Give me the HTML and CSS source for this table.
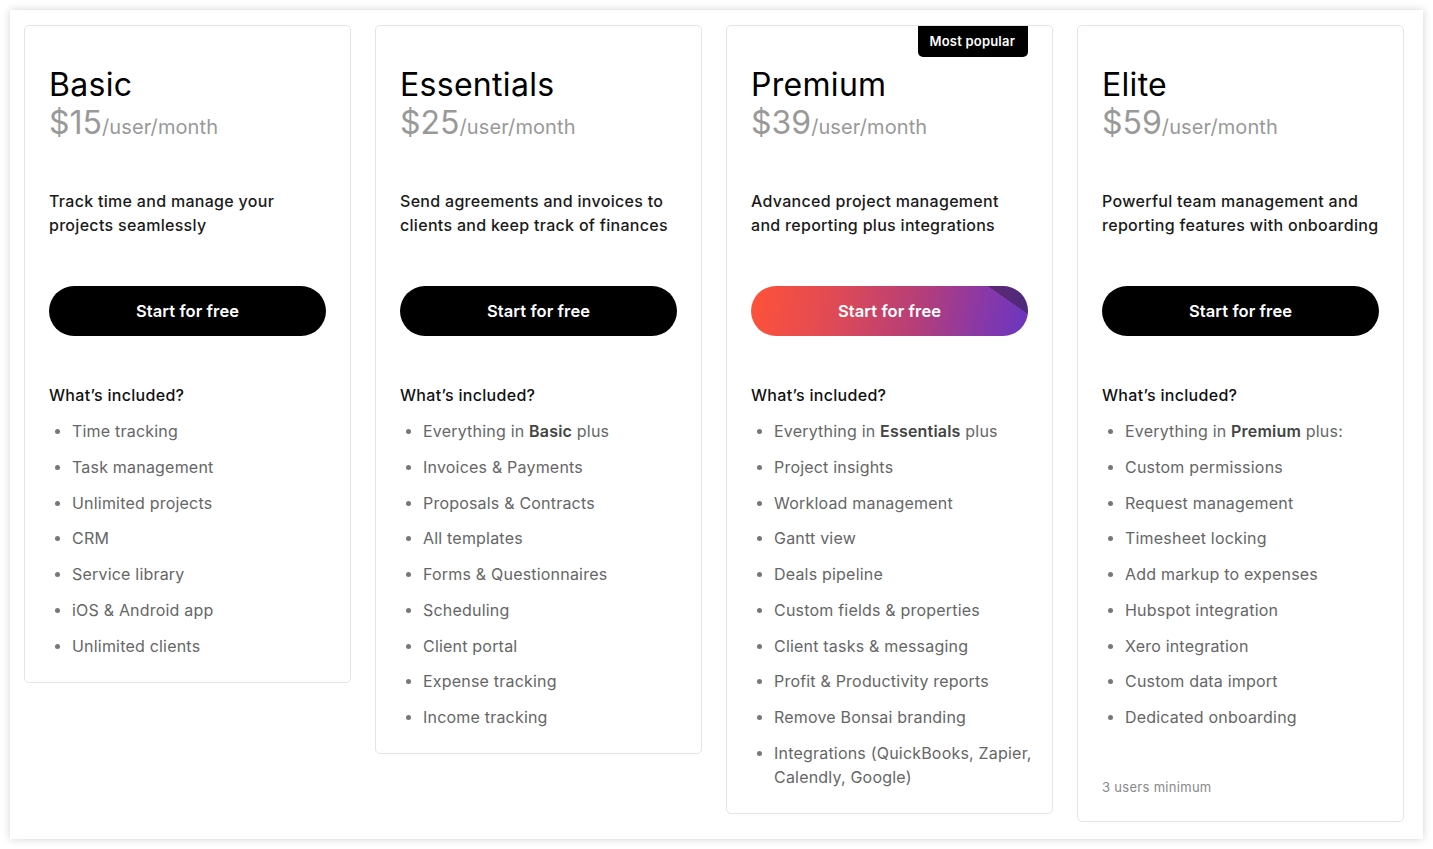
FILE: index.html
```html
<!DOCTYPE html>
<html lang="en">
<head>
<meta charset="utf-8">
<title>Pricing</title>
<link rel="stylesheet" href="styles.css">
</head>
<body>
<div class="panel">
  <div class="plans">
    <div class="card">
      <h2 class="name">Basic</h2>
      <div class="price"><span class="amount">$15</span><span class="per">/user/month</span></div>
      <p class="desc">Track time and manage your projects seamlessly</p>
      <a class="cta">Start for free</a>
      <h3 class="inc">What’s included?</h3>
      <ul class="features">
        <li>Time tracking</li>
        <li>Task management</li>
        <li>Unlimited projects</li>
        <li>CRM</li>
        <li>Service library</li>
        <li>iOS &amp; Android app</li>
        <li>Unlimited clients</li>
      </ul>
    </div>
    <div class="card">
      <h2 class="name">Essentials</h2>
      <div class="price"><span class="amount">$25</span><span class="per">/user/month</span></div>
      <p class="desc">Send agreements and invoices to clients and keep track of finances</p>
      <a class="cta">Start for free</a>
      <h3 class="inc">What’s included?</h3>
      <ul class="features">
        <li>Everything in <b>Basic</b> plus</li>
        <li>Invoices &amp; Payments</li>
        <li>Proposals &amp; Contracts</li>
        <li>All templates</li>
        <li>Forms &amp; Questionnaires</li>
        <li>Scheduling</li>
        <li>Client portal</li>
        <li>Expense tracking</li>
        <li>Income tracking</li>
      </ul>
    </div>
    <div class="card">
      <span class="badge">Most popular</span>
      <h2 class="name">Premium</h2>
      <div class="price"><span class="amount">$39</span><span class="per">/user/month</span></div>
      <p class="desc">Advanced project management and reporting plus integrations</p>
      <a class="cta cta-grad">Start for free</a>
      <h3 class="inc">What’s included?</h3>
      <ul class="features">
        <li>Everything in <b>Essentials</b> plus</li>
        <li>Project insights</li>
        <li>Workload management</li>
        <li>Gantt view</li>
        <li>Deals pipeline</li>
        <li>Custom fields &amp; properties</li>
        <li>Client tasks &amp; messaging</li>
        <li>Profit &amp; Productivity reports</li>
        <li>Remove Bonsai branding</li>
        <li>Integrations (QuickBooks, Zapier, Calendly, Google)</li>
      </ul>
    </div>
    <div class="card">
      <h2 class="name">Elite</h2>
      <div class="price"><span class="amount">$59</span><span class="per">/user/month</span></div>
      <p class="desc">Powerful team management and reporting features with onboarding</p>
      <a class="cta">Start for free</a>
      <h3 class="inc">What’s included?</h3>
      <ul class="features">
        <li>Everything in <b>Premium</b> plus:</li>
        <li>Custom permissions</li>
        <li>Request management</li>
        <li>Timesheet locking</li>
        <li>Add markup to expenses</li>
        <li>Hubspot integration</li>
        <li>Xero integration</li>
        <li>Custom data import</li>
        <li>Dedicated onboarding</li>
      </ul>
      <p class="note">3 users minimum</p>
    </div>
  </div>
</div>
</body>
</html>
```
FILE: styles.css
```css
* { box-sizing: border-box; }
html, body { margin: 0; padding: 0; background: #fff; }
body {
  font-family: Inter, "Liberation Sans", Arial, sans-serif;
  color: #111;
  padding: 10px;
  letter-spacing: 0.3px;
}
.panel {
  background: #fff;
  box-shadow: 0 0 8px rgba(0, 0, 0, 0.18);
  height: 829px;
  width: 1413px;
  padding: 15px 14px;
}
.plans {
  display: flex;
  align-items: flex-start;
  gap: 24px;
}
.card {
  position: relative;
  width: 327px;
  border: 1px solid #e4e4e4;
  border-radius: 5px;
  padding: 40px 24px 24px;
  display: flex;
  flex-direction: column;
}
.badge {
  position: absolute;
  top: 0;
  right: 24px;
  background: #000;
  color: #fff;
  font-size: 13px;
  font-weight: 600;
  line-height: 31px;
  height: 31px;
  padding: 0 13px 0 12px;
  border-radius: 0 0 5px 5px;
  letter-spacing: 0.2px;
}
.name {
  margin: 0;
  font-size: 32px;
  line-height: 38px;
  font-weight: 400;
  color: #000;
  letter-spacing: 0.3px;
}
.price {
  line-height: 38px;
  color: #999;
  white-space: nowrap;
}
.amount { font-size: 32px; letter-spacing: 0; }
.per { font-size: 20px; letter-spacing: 0.1px; }
.desc {
  margin: 42px 0 0;
  font-size: 16px;
  line-height: 24px;
  font-weight: 500;
  color: #1a1a1a;
  min-height: 48px;
}
.cta {
  display: flex;
  align-items: center;
  justify-content: center;
  margin-top: 49px;
  height: 50px;
  border-radius: 25px;
  background: #000;
  color: #fff;
  font-size: 16.5px;
  font-weight: 600;
  letter-spacing: 0.1px;
  position: relative;
  overflow: hidden;
}
.cta-grad {
  background: linear-gradient(100deg, #ff5238 0%, #e04a55 30%, #b53e78 60%, #8a38a6 82%, #6a36c0 100%);
}
.cta-grad::after {
  content: "";
  position: absolute;
  top: 0;
  right: 0;
  width: 40px;
  height: 28px;
  background: linear-gradient(to bottom left, rgba(55, 30, 70, 0.55) 50%, transparent 50.5%);
}
.inc {
  margin: 47px 0 0;
  font-size: 16px;
  line-height: 24px;
  font-weight: 500;
  color: #111;
}
.features {
  list-style: none;
  margin: 12px -8px 0 0;
  padding: 0;
  display: flex;
  flex-direction: column;
  gap: 11.75px;
}
.features li {
  position: relative;
  padding-left: 23px;
  font-size: 16px;
  line-height: 24px;
  color: #666;
  letter-spacing: 0.2px;
}
.features li::before {
  content: "";
  position: absolute;
  left: 6px;
  top: 10px;
  width: 5px;
  height: 5px;
  border-radius: 50%;
  background: #777;
}
.features b { font-weight: 600; color: #444; }
.note {
  margin: 48px 0 0;
  font-size: 13px;
  line-height: 20px;
  color: #888;
}
```
